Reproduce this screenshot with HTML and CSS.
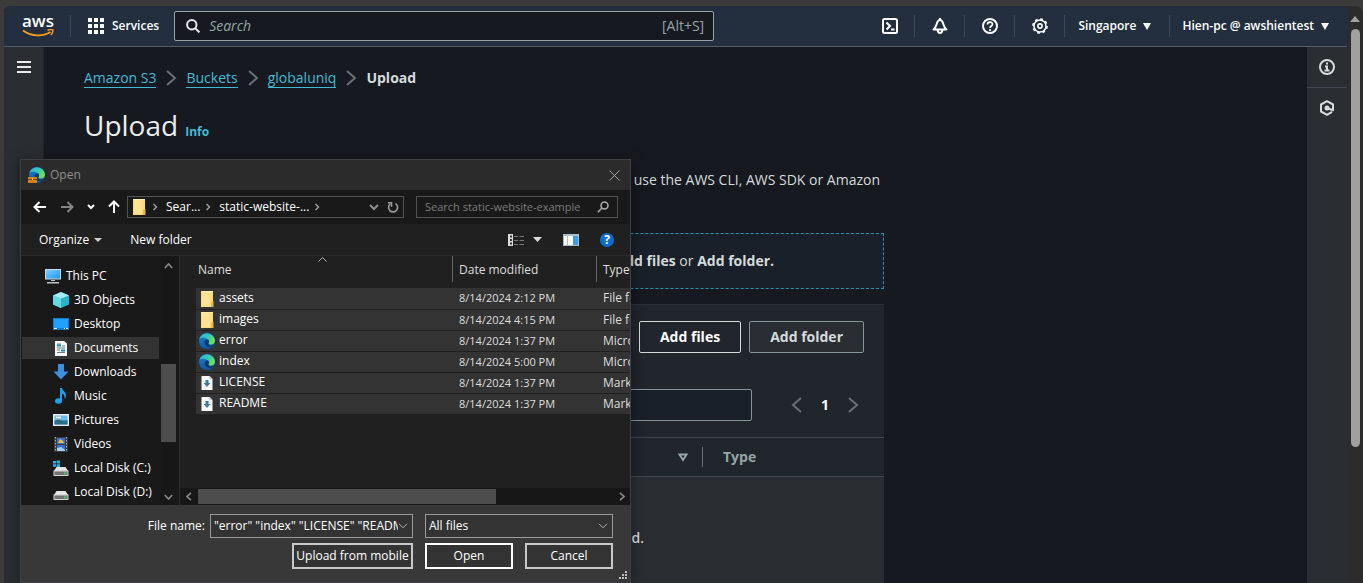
FILE: index.html
```html
<!DOCTYPE html>
<html lang="en">
<head>
<meta charset="utf-8">
<title>Upload objects - S3 bucket</title>
<link rel="stylesheet" href="styles.css">
</head>
<body>
<svg class="defs" aria-hidden="true">
  <defs>
    <linearGradient id="edge-a" x1="0" y1="0" x2="1" y2="0.4"><stop offset="0" stop-color="#2bb8e6"/><stop offset="0.6" stop-color="#38c9b0"/><stop offset="1" stop-color="#6be25a"/></linearGradient>
    <linearGradient id="edge-b" x1="0" y1="0" x2="0.3" y2="1"><stop offset="0" stop-color="#1583d8"/><stop offset="1" stop-color="#0c59a4"/></linearGradient>
    <linearGradient id="screen" x1="0" y1="0" x2="1" y2="1"><stop offset="0" stop-color="#7cd0ff"/><stop offset="1" stop-color="#1e97f0"/></linearGradient>
    <symbol id="edge" viewBox="0 0 16 16">
      <circle cx="8" cy="8" r="8" fill="url(#edge-b)"/>
      <path d="M.4 6A8 8 0 0 1 16 7.600c0 2.600-2 3.900-4 3.900-1.600 0-2.700-.6-2.500-1.200.9-1.100.8-2.800-.4-3.900C6.600 4.300 2.300 4.200.4 6z" fill="url(#edge-a)"/>
      <path d="M9.400 6.700C7 5.600 5 8 5.800 10.600c.8 2.700 3.800 4.400 7.400 3.400 .8-.5 1.500-1.200 1.900-2-2.700 1.100-6 .4-5.800-1.600.8-1.100.9-2.500.1-3.700z" fill="#12386b"/>
    </symbol>
    <symbol id="folder" viewBox="0 0 16 16"><path d="M2 0h12v16H2z" fill="#fbdc78"/><path d="M2 0h12v1H2z" fill="#fff0b0"/><path d="M12 11.500l1-1.500h1.500v6H12z" fill="#e3b84a"/><path d="M3 1h8v14H3z" fill="#fde393"/></symbol>
    <symbol id="mdfile" viewBox="0 0 16 16"><path d="M2.500 1h8l3 3v11h-11z" fill="#fafafa"/><path d="M10.500 1v3h3z" fill="#b9c2c9"/><path d="M6.500 5h3v3h2L8 12 4.500 8h2z" fill="#3e7d9f"/></symbol>
    <symbol id="drive" viewBox="0 0 16 16"><path d="M3.500 7h9l2.500 4H1z" fill="#e6e6e6"/><rect x="1" y="11" width="14" height="4.500" fill="#6f7271" stroke="#d5d5d5"/><circle cx="12" cy="13.200" r="1" fill="#45e06a"/></symbol>
    <symbol id="next" viewBox="0 0 16 16"><path d="M4 1l8 7-8 7" fill="none" stroke="currentColor" stroke-width="2"/></symbol>
    <symbol id="angle" viewBox="0 0 10 10"><path d="M3.500 2l3 3-3 3" fill="none" stroke="currentColor" stroke-width="1.500"/></symbol>
  </defs>
</svg>

<div class="browser">
  <div class="page">
    <header class="topbar">
      <a class="logo" href="#"><span>aws</span>
        <svg width="32" height="9" viewBox="0 0 32 9"><path d="M1 1.500c9 6.500 20 6 27.500 1.500" fill="none" stroke="#f79a20" stroke-width="2"/><path d="M25.500 1.400c2-.9 4-.9 5.300-.5.200 1.400-.4 3.600-1.800 5.100" fill="none" stroke="#f79a20" stroke-width="1.500"/></svg>
      </a>
      <span class="rule"></span>
      <button class="services">
        <svg width="16" height="16" viewBox="0 0 16 16" fill="#fff"><path d="M0 0h4v4H0zM6 0h4v4H6zM12 0h4v4h-4zM0 6h4v4H0zM6 6h4v4H6zM12 6h4v4h-4zM0 12h4v4H0zM6 12h4v4H6zM12 12h4v4h-4z"/></svg>
        Services
      </button>
      <label class="search">
        <svg width="14" height="14" viewBox="0 0 14 14" fill="none" stroke="#e6e8ea" stroke-width="2"><circle cx="5.800" cy="5.800" r="4.700"/><path d="M9.200 9.200l4.200 4.200"/></svg>
        <input type="search" placeholder="Search" aria-label="Search">
        <span>[Alt+S]</span>
      </label>
      <nav class="tools">
        <button class="tool" aria-label="CloudShell"><svg width="16" height="16" viewBox="0 0 16 16" fill="none" stroke="#fff" stroke-width="2"><rect x="1" y="1" width="14" height="14" rx="1.500"/><path d="M4.500 4.500L8 8l-3.500 3.500M9 11.500h3.500"/></svg></button>
        <button class="tool" aria-label="Notifications"><svg width="16" height="16" viewBox="0 0 16 16" fill="none" stroke="#fff" stroke-width="2"><path d="M8 0v2M1.500 11.500h13c-2.300-2-2.500-3.200-3.200-5.500C10.700 3.500 10 2 8 2S5.300 3.500 4.700 6c-.7 2.300-.9 3.500-3.200 5.500z" stroke-linejoin="round"/><path d="M5.700 12c.2 4 4.400 4 4.600 0"/></svg></button>
        <button class="tool" aria-label="Help"><svg width="16" height="16" viewBox="0 0 16 16" fill="none" stroke="#fff" stroke-width="2"><circle cx="8" cy="8" r="7"/><path d="M5.500 6.500C5.500 3.300 10.500 3.300 10.500 6.300 10.500 8 8 8 8 10M8 11v2" stroke-width="1.700"/></svg></button>
        <button class="tool" aria-label="Settings"><svg width="16" height="16" viewBox="0 0 16 16" fill="none" stroke="#fff"><circle cx="8" cy="8" r="6" stroke-width="1.500"/><circle cx="8" cy="8" r="7.100" stroke-width="1.500" stroke-dasharray="2.800 2.776"/><circle cx="8" cy="8" r="2.100" stroke-width="1.600"/></svg></button>
        <button class="menu">Singapore <svg width="8" height="7" viewBox="0 0 8 7"><path d="M0 0h8L4 7z" fill="#fff"/></svg></button>
        <button class="menu account">Hien-pc @ awshientest <svg width="8" height="7" viewBox="0 0 8 7"><path d="M0 0h8L4 7z" fill="#fff"/></svg></button>
      </nav>
    </header>

    <div class="body">
      <aside class="rail">
        <button class="hamburger" aria-label="Open navigation"><svg width="14" height="12" viewBox="0 0 14 12" fill="#e9ebed"><path d="M0 0h14v2H0zM0 5h14v2H0zM0 10h14v2H0z"/></svg></button>
      </aside>
      <main class="main">
        <nav class="crumbs" aria-label="Breadcrumbs">
          <a href="#">Amazon S3</a><svg width="14" height="16" viewBox="0 0 14 16"><use href="#next" x="-1" width="16" height="16"/></svg>
          <a href="#">Buckets</a><svg width="14" height="16" viewBox="0 0 14 16"><use href="#next" x="-1" width="16" height="16"/></svg>
          <a href="#">globaluniq</a><svg width="14" height="16" viewBox="0 0 14 16"><use href="#next" x="-1" width="16" height="16"/></svg>
          <b>Upload</b>
        </nav>
        <div class="heading"><h1>Upload</h1><a href="#">Info</a></div>
        <p class="intro">, use the AWS CLI, AWS SDK or Amazon</p>
        <div class="dropzone"><span><b>Add files</b> or <b>Add folder.</b></span></div>
        <section class="card">
          <div class="actions"><button class="btn primary">Add files</button><button class="btn">Add folder</button></div>
          <div class="filter">
            <input type="text" aria-label="Find by name">
            <div class="pager">
              <button aria-label="Previous page"><svg class="flip" width="16" height="16"><use href="#next"/></svg></button>
              <b>1</b>
              <button aria-label="Next page"><svg width="16" height="16"><use href="#next"/></svg></button>
            </div>
          </div>
          <div class="columns">
            <svg width="10" height="9" viewBox="0 0 10 9" fill="none" stroke="#95a5a6" stroke-width="2"><path d="M1.500 1.500h7L5 7z"/></svg>
            <span class="bar"></span>
            <b>Type</b>
          </div>
          <div class="empty">found.</div>
        </section>
      </main>
      <aside class="rail right">
        <button aria-label="Info panel"><svg width="16" height="16" viewBox="0 0 16 16" fill="none" stroke="#d5dbdb" stroke-width="2"><circle cx="8" cy="8" r="7"/><path d="M8 3.500v2M6 7.500h2v4M5.500 11.500h5"/></svg></button>
        <button aria-label="Diagnostics"><svg width="16" height="16" viewBox="0 0 16 16" fill="none" stroke="#d5dbdb" stroke-width="2"><path d="M13 11.800L8 14.800l-6-3.300v-7L8 1.200l6 3.300v5.800l-5.500-2" stroke-linejoin="round"/><circle cx="8" cy="8" r="1.500" fill="#d5dbdb"/></svg></button>
      </aside>
    </div>
  </div>
  <div class="scroll"><svg width="10" height="6" viewBox="0 0 10 6"><path d="M5 0l5 6H0z" fill="#a0a0a0"/></svg><i></i></div>
</div>

<div class="dialog" role="dialog" aria-label="Open">
  <div class="title">
    <svg width="17" height="17" viewBox="0 0 17 17"><use href="#edge" x="1" width="16" height="16"/><path d="M0 10h9v6H0z" fill="#d9820f"/><path d="M0 12h9v1H0z" fill="#7b3c06"/><path d="M4 11h1v2H4z" fill="#ffc24a"/></svg>
    <span>Open</span>
    <button aria-label="Close"><svg width="11" height="11" viewBox="0 0 11 11"><path d="M.5.5l10 10M10.500.5l-10 10" stroke="#a9a9a9"/></svg></button>
  </div>

  <div class="address">
    <div class="arrows">
      <button aria-label="Back"><svg width="14" height="12" viewBox="0 0 14 12" fill="none" stroke="#fff" stroke-width="2"><path d="M13 6H2M6.500 1L1.500 6l5 5"/></svg></button>
      <button aria-label="Forward"><svg width="14" height="12" viewBox="0 0 14 12" fill="none" stroke="#858585" stroke-width="2"><path d="M1 6h11M7.500 1l5 5-5 5"/></svg></button>
      <button aria-label="Recent"><svg width="8" height="6" viewBox="0 0 8 6" fill="none" stroke="#fff" stroke-width="2"><path d="M1 1l3 3 3-3"/></svg></button>
      <button aria-label="Up"><svg width="12" height="14" viewBox="0 0 12 14" fill="none" stroke="#fff" stroke-width="2"><path d="M6 13V2M1 6.500l5-5 5 5"/></svg></button>
    </div>
    <div class="path">
      <svg width="16" height="16"><use href="#folder"/></svg>
      <svg class="sep" width="10" height="10"><use href="#angle"/></svg><span>Sear...</span>
      <svg class="sep" width="10" height="10"><use href="#angle"/></svg><span>static-website-...</span>
      <svg class="sep" width="10" height="10"><use href="#angle"/></svg>
      <button class="drop" aria-label="Previous locations"><svg width="10" height="7" viewBox="0 0 10 7" fill="none" stroke="#8f8f8f" stroke-width="2"><path d="M1 1l4 4 4-4"/></svg></button>
      <button aria-label="Refresh"><svg width="12" height="12" viewBox="0 0 12 12" fill="none" stroke="#9a9a9a" stroke-width="1.600"><path d="M8.500 2.600A4.500 4.500 0 1 1 3.200 2.900"/><path d="M1 1.800h3.500v4"/></svg></button>
    </div>
    <label class="find"><input type="search" placeholder="Search static-website-example" aria-label="Search static-website-example">
      <svg width="12" height="12" viewBox="0 0 12 12" fill="none" stroke="#aaa" stroke-width="1.600"><circle cx="7.500" cy="4.500" r="3.500"/><path d="M5 7L.8 11.200"/></svg></label>
  </div>

  <div class="toolbar">
    <button class="org">Organize <svg width="8" height="4" viewBox="0 0 8 4"><path d="M0 0h8L4 4z" fill="#d0d0d0"/></svg></button>
    <button>New folder</button>
    <div class="views">
      <button aria-label="Change view"><svg width="16" height="12" viewBox="0 0 16 12"><path d="M0 0h5v12H0z" fill="#ddd"/><path d="M2 1.500h2v2H2zM2 5h2v2H2zM2 8.500h2v2H2z" fill="#333"/><path d="M6 2.500h4M11.500 2.500H16M6 6.500h4M11.500 6.500H16M6 10.500h4M11.500 10.500H16" stroke="#777"/></svg></button>
      <button aria-label="More view options"><svg width="9" height="5" viewBox="0 0 9 5"><path d="M0 0h9L4.500 5z" fill="#ddd"/></svg></button>
      <button class="preview" aria-label="Preview pane"><svg width="16" height="12" viewBox="0 0 16 12"><path d="M0 0h16v12H0z" fill="#a8bcc9"/><path d="M1 2h4v9H1zM5 2h5v9H5z" fill="#fff"/><path d="M4.500 2v9" stroke="#bbb"/><path d="M10 2h5v9h-5z" fill="#3f9be8"/></svg></button>
      <button class="help" aria-label="Get help">?</button>
    </div>
  </div>

  <div class="panes">
    <ul class="tree">
      <li class="root"><svg width="16" height="16" viewBox="0 0 16 16"><path d="M0 1h16v10.500H0z" fill="#c9d8e2"/><path d="M1 2h14v8.500H1z" fill="url(#screen)"/><path d="M6 12h4v1H6zM2 14h12v1.500H2z" fill="#b7c6cf"/></svg>This PC</li>
      <li><svg width="16" height="16" viewBox="0 0 16 16"><path d="M8 0l8 3.500v9L8 16l-8-3.500v-9z" fill="#2bb3cc"/><path d="M0 3.500L8 0l8 3.500L8 6.500z" fill="#a6ecf2"/><path d="M0 3.500l8 3V16l-8-3.500z" fill="#67d9e6"/></svg>3D Objects</li>
      <li><svg width="16" height="16" viewBox="0 0 16 16"><path d="M0 2h16v12H0z" fill="#0c7bdc"/><path d="M1 3h14v9H1z" fill="#21a0fb"/><path d="M1 12.500h3M11 12.500h1M13 12.500h2" stroke="#fff"/></svg>Desktop</li>
      <li class="current"><svg width="16" height="16" viewBox="0 0 16 16"><path d="M2 1h9l3 2.500V16H2z" fill="#f4f6f7"/><path d="M4 4h4M9 6h3M4 8h8M4 10h3M4 12.500h8" stroke="#6d7f8b"/><path d="M4 5.500h4M8 10.500h4" stroke="#1a8eae" stroke-width="2"/></svg>Documents</li>
      <li><svg width="16" height="16" viewBox="0 0 16 16"><path d="M5 0h6v7.500h4.500L8 15.500.5 7.500H5z" fill="#3a92e0"/></svg>Downloads</li>
      <li><svg width="16" height="16" viewBox="0 0 16 16" fill="#18a0f5"><path d="M7 0h2c.4 3 4.600 4 4 8.500-.3 1.200-.8 1.800-1.400 2.300.4-2.900-.4-4.400-2.600-5.300V13H7z"/><ellipse cx="5.500" cy="13" rx="3.500" ry="2.800"/></svg>Music</li>
      <li><svg width="16" height="16" viewBox="0 0 16 16"><path d="M0 2h16v12H0z" fill="#e8eef2"/><path d="M1.500 3.500h13v9h-13z" fill="#6db9f0"/><path d="M1.500 9c4-3 8 1 13-1v4.500h-13z" fill="#2b6f86"/><path d="M3 5.500h5" stroke="#fff" stroke-width="1.500"/></svg>Pictures</li>
      <li><svg width="16" height="16" viewBox="0 0 16 16"><path d="M1 1h14v15H1z" fill="#3b3b3b"/><path d="M2.500 1v15M13.500 1v15" stroke="#aaa" stroke-dasharray="1.500 1.500"/><path d="M4 2h8v6H4zM4 9h8v6H4z" fill="#3a6fd0"/><path d="M7 3l3 2 1 2H5z" fill="#f0c040"/><path d="M4 12l4-1 4 3v1H4z" fill="#9fd0f0"/></svg>Videos</li>
      <li><svg width="16" height="16" viewBox="0 0 16 16"><use href="#drive" width="16" height="16"/><path d="M0 1h3v2.500H0zM3.700.6H7v2.900H3.700zM0 4.200h3v2.500H0zM3.700 4.200H7v2.900H3.700z" fill="#22b4e8"/></svg>Local Disk (C:)</li>
      <li><svg width="16" height="16"><use href="#drive"/></svg>Local Disk (D:)</li>
    </ul>
    <div class="vbar">
      <svg width="9" height="6" viewBox="0 0 9 6" fill="none" stroke="#8a8a8a" stroke-width="1.600"><path d="M.8 5l3.700-4 3.700 4"/></svg>
      <i></i>
      <svg width="9" height="6" viewBox="0 0 9 6" fill="none" stroke="#8a8a8a" stroke-width="1.600"><path d="M.8 1l3.700 4 3.700-4"/></svg>
    </div>
    <div class="files">
      <div class="list">
        <table>
          <thead><tr><th class="name">Name<svg width="9" height="5" viewBox="0 0 9 5" fill="none" stroke="#b0b0b0"><path d="M.5 4.500l4-4 4 4"/></svg></th><th class="date">Date modified</th><th class="type">Type</th></tr></thead>
          <tbody>
            <tr><td><svg width="16" height="16"><use href="#folder"/></svg>assets</td><td>8/14/2024 2:12 PM</td><td>File folder</td></tr>
            <tr><td><svg width="16" height="16"><use href="#folder"/></svg>images</td><td>8/14/2024 4:15 PM</td><td>File folder</td></tr>
            <tr><td><svg width="16" height="16"><use href="#edge"/></svg>error</td><td>8/14/2024 1:37 PM</td><td>Microsoft</td></tr>
            <tr><td><svg width="16" height="16"><use href="#edge"/></svg>index</td><td>8/14/2024 5:00 PM</td><td>Microsoft</td></tr>
            <tr><td><svg width="16" height="16"><use href="#mdfile"/></svg>LICENSE</td><td>8/14/2024 1:37 PM</td><td>Markdown</td></tr>
            <tr><td><svg width="16" height="16"><use href="#mdfile"/></svg>README</td><td>8/14/2024 1:37 PM</td><td>Markdown</td></tr>
          </tbody>
        </table>
      </div>
      <div class="hbar">
        <svg width="6" height="9" viewBox="0 0 6 9" fill="none" stroke="#8a8a8a" stroke-width="1.600"><path d="M5 .8L1 4.500l4 3.700"/></svg>
        <div class="track"><i></i></div>
        <svg width="6" height="9" viewBox="0 0 6 9" fill="none" stroke="#8a8a8a" stroke-width="1.600"><path d="M1 .8l4 3.700-4 3.700"/></svg>
      </div>
    </div>
  </div>

  <div class="footer">
    <div class="row">
      <label for="fname">File name:</label>
      <div class="combo"><input id="fname" type="text" value='"error" "index" "LICENSE" "README"'><svg width="10" height="6" viewBox="0 0 10 6" fill="none" stroke="#b5b5b5"><path d="M1 .8l4 4 4-4"/></svg></div>
      <div class="combo filetype"><select aria-label="File type"><option>All files</option></select><svg width="10" height="6" viewBox="0 0 10 6" fill="none" stroke="#b5b5b5"><path d="M1 .8l4 4 4-4"/></svg></div>
    </div>
    <div class="row buttons">
      <button class="mobile">Upload from mobile</button>
      <button class="ok">Open</button>
      <button>Cancel</button>
    </div>
    <svg class="grip" width="9" height="9" viewBox="0 0 9 9" fill="#bdbdbd"><path d="M6 0h2v2H6zM3 3h2v2H3zM6 3h2v2H6zM0 6h2v2H0zM3 6h2v2H3zM6 6h2v2H6z"/></svg>
  </div>
</div>
</body>
</html>
```
FILE: styles.css
```css
* { box-sizing: border-box; }
html, body { height: 100%; margin: 0; overflow: hidden; }
body { background: #3b3b3b; color: #d5dbdb; font: 14px/20px "Open Sans", "Noto Sans", sans-serif; }
svg { display: block; flex: none; }
button { display: flex; align-items: center; justify-content: center; margin: 0; padding: 0; border: 0; background: none; color: inherit; font: inherit; white-space: nowrap; }
input, select { min-width: 0; padding: 0; border: 0; outline: 0; background: none; color: inherit; font: inherit; appearance: none; }
a { color: #44b9d6; text-decoration: none; }
.defs { position: absolute; width: 0; height: 0; }

/* Browser frame */
.browser { display: flex; height: 100%; padding: 6px 0 0 4px; }
.page { display: flex; flex: 1; flex-direction: column; min-width: 0; border-top-left-radius: 6px; overflow: hidden; background: #16191f; }
.scroll { display: flex; flex: none; flex-direction: column; align-items: center; gap: 7px; width: 16px; padding-top: 10px; border-top-right-radius: 8px; background: #2c2c2c; }
.scroll i { width: 9px; height: 418px; border-radius: 5px; background: #a0a0a0; }

/* Console header */
.topbar { display: flex; flex: none; align-items: center; height: 41px; padding-left: 18px; border-bottom: 1px solid #545b64; background: #232f3e; color: #fff; font-size: 12px; font-weight: 600; }
.logo { display: flex; flex-direction: column; align-items: center; width: 32px; color: #fff; font-size: 17px; line-height: 16px; margin-bottom: 2px; }
.rule { width: 1px; height: 22px; margin: 0 17px 0 16px; background: #3d4856; }
.services { gap: 8px; margin-right: 15px; }
.search { display: flex; align-items: center; gap: 9px; width: 540px; height: 30px; padding: 0 9px 0 11px; border: 1px solid #95a5a6; border-radius: 2px; background: #16191f; color: #95a5a6; font-size: 14px; font-weight: 400; }
.search input { flex: 1; }
.search input::placeholder { color: #95a5a6; font-style: italic; opacity: 1; }
.tools { display: flex; align-items: center; margin-left: auto; }
.tools button { height: 22px; border-right: 1px solid #3d4856; }
.tool { width: 50px; }
.menu { gap: 7px; padding: 0 18px 0 13px; }
.tools .account { padding-left: 12px; border: 0; }

/* Console body */
.body { display: flex; flex: 1; min-height: 0; }
.rail { flex: none; width: 40px; border-right: 1px solid #21252c; background: #2a2e33; }
.hamburger { width: 40px; height: 40px; }
.right { border: 0; }
.right button { width: 40px; height: 41px; border-bottom: 1px solid #414750; }
.right button + button { height: 40px; border: 0; }
.main { display: flex; flex: 0 1 840px; flex-direction: column; margin-right: auto; padding: 21px 0 0 40px; }
.crumbs { display: flex; align-items: center; gap: 8px; color: #687078; }
.crumbs a { line-height: 18px; border-bottom: 1px solid #44b9d6; }
.crumbs b { color: #d5dbdb; }
.heading { display: flex; align-items: baseline; gap: 7px; margin-top: 19px; }
.heading h1 { margin: 0; color: #eaeded; font-size: 28px; font-weight: 400; line-height: 36px; }
.heading a { font-size: 12px; font-weight: 700; }
.intro { margin: 27px 4px 0; font-weight: 500; text-align: right; }
.dropzone { display: flex; align-items: center; justify-content: flex-end; height: 56px; margin-top: 43px; padding-right: 109px; border: 1px dashed #2596ad; background: #1a2029; }
.card { display: flex; flex: 1; flex-direction: column; margin-top: 15px; border-top: 1px solid #2c323a; background: #21252c; }
.actions { display: flex; gap: 8px; justify-content: flex-end; padding: 16px 20px 0; }
.btn { height: 32px; padding: 0 20px; border: 1px solid #879596; border-radius: 2px; background: #2a2e33; font-weight: 700; }
.primary { border-color: #d5dbdb; background: #21252c; color: #fff; }
.filter { display: flex; justify-content: space-between; padding: 36px 23px 16px 20px; }
.filter input { width: 648px; height: 32px; border: 1px solid #879596; border-radius: 2px; background: #1a2029; }
.pager { display: flex; align-items: center; gap: 16px; color: #687078; }
.pager b { color: #fff; }
.flip { transform: scaleX(-1); }
.columns { display: flex; align-items: center; height: 40px; padding-left: 594px; border: 1px solid #414750; border-width: 1px 0; color: #95a5a6; }
.bar { width: 1px; height: 20px; margin: 0 20px 0 14px; background: #687078; }
.empty { flex: 1; padding: 51px 240px 0 0; background: #2a2e33; font-weight: 600; text-align: right; }

/* File dialog window */
.dialog { position: absolute; top: 159px; left: 20px; width: 611px; border: 1px solid #3e4043; background: #202020; color: #fff; font-size: 12px; line-height: 16px; box-shadow: 0 2px 14px rgba(0, 0, 0, .4); }
.title { display: flex; align-items: center; gap: 5px; height: 30px; padding: 0 10px 0 7px; background: #2b2b2b; color: #8e8e8e; }
.title button { margin-left: auto; }
.address { display: flex; align-items: center; height: 34px; padding: 0 12px; background: #191919; }
.arrows { display: flex; align-items: center; justify-content: space-between; width: 87px; margin-right: 7px; }
.path, .find { display: flex; align-items: center; height: 22px; border: 1px solid #535353; }
.path { width: 277px; padding: 0 4px 0 3px; }
.sep { margin: 0 6px 0 3px; color: #999; }
.drop { margin: 0 8px 0 auto; }
.find { flex: 1; margin-left: 12px; padding: 0 8px; }
.find input { flex: 1; font-size: 11px; }
.find input::placeholder { color: #7c7c7c; opacity: 1; }
.toolbar { display: flex; align-items: center; gap: 28px; height: 32px; padding: 0 16px 0 18px; border-bottom: 1px solid #2b2b2b; }
.org { gap: 5px; }
.views { display: flex; align-items: center; gap: 9px; margin-left: auto; }
.preview { margin: 0 12px; }
.help { width: 14px; height: 14px; border-radius: 50%; background: #0a6ed1; font-weight: 700; }

.panes { display: flex; height: 249px; overflow: hidden; }
.tree { flex: none; width: 140px; margin: 0; padding: 9px 2px 0 1px; list-style: none; background: #191919; }
.tree li { display: flex; align-items: center; gap: 5px; height: 22px; margin-bottom: 2px; padding-left: 31px; white-space: nowrap; }
.tree .root { padding-left: 23px; }
.tree .current { background: #333; }
.vbar { display: flex; flex: none; flex-direction: column; align-items: center; justify-content: space-between; width: 19px; padding: 7px 3px 5px 0; border-right: 1px solid #2e2e2e; background: #171717; }
.vbar i { width: 15px; height: 78px; margin-top: 92px; margin-bottom: 50px; background: #4d4d4d; }
.files { display: flex; flex: 1; flex-direction: column; min-width: 0; }
.list { flex: 1; padding-left: 16px; overflow: hidden; }
table { width: 560px; table-layout: fixed; border-collapse: collapse; white-space: nowrap; }
th { height: 32px; padding: 0 0 4px 7px; font-weight: 400; text-align: left; color: #dedede; }
th svg { position: absolute; top: 97px; left: 297px; }
.name { width: 256px; padding-left: 2px; }
.date { width: 144px; }
.date, .type { background: linear-gradient(#636363, #636363) left 0 top 0 / 1px 26px no-repeat; }
td { height: 21px; padding: 0 0 0 7px; border-bottom: 1px solid #202020; background: #333; color: #dedede; }
td:first-child { padding-left: 3px; color: #fff; }
td:nth-child(2) { font-size: 11px; }
td svg { display: inline-block; margin-right: 4px; vertical-align: middle; }
.hbar { display: flex; flex: none; align-items: center; gap: 6px; height: 17px; padding: 0 5px 0 6px; background: #171717; }
.track { flex: 1; }
.track i { display: block; width: 298px; height: 15px; background: #4d4d4d; }

.footer { position: relative; height: 77px; padding: 9px 17px 0 0; background: #383838; }
.row { display: flex; align-items: center; justify-content: flex-end; gap: 12px; }
.row label { margin-right: -7px; }
.combo { display: flex; align-items: center; width: 203px; height: 24px; padding: 0 4px 0 3px; border: 1px solid #9b9b9b; background: #333; }
.combo input, .combo select { flex: 1; }
.filetype { width: 188px; }
.buttons { margin-top: 5px; }
.buttons button { width: 88px; height: 26px; border: 2px solid #c8c8c8; background: #333; }
.buttons .mobile { width: 121px; }
.buttons .ok { border-color: #fff; }
.grip { position: absolute; right: 2px; bottom: 2px; }
```
